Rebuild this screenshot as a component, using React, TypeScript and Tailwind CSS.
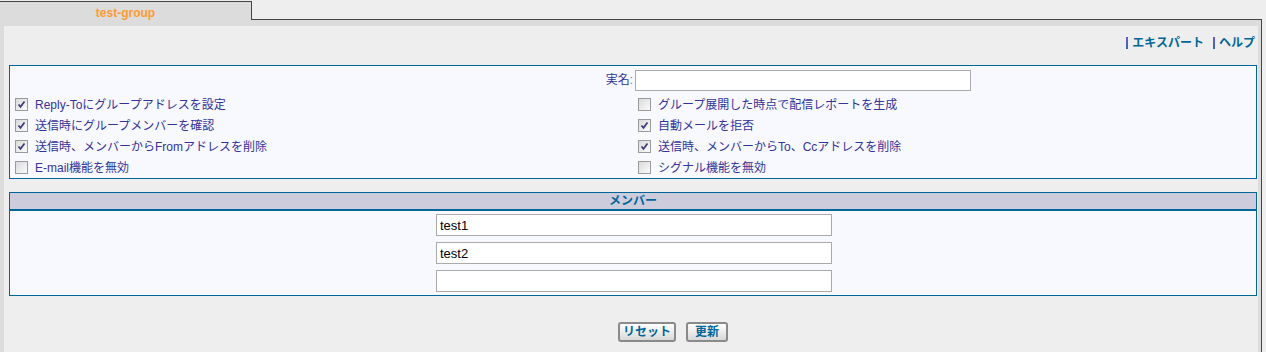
import React from 'react'

type Opt = { label: string; checked: boolean }

const leftOpts: Opt[] = [
  { label: 'Reply-Toにグループアドレスを設定', checked: true },
  { label: '送信時にグループメンバーを確認', checked: true },
  { label: '送信時、メンバーからFromアドレスを削除', checked: true },
  { label: 'E-mail機能を無効', checked: false },
]

const rightOpts: Opt[] = [
  { label: 'グループ展開した時点で配信レポートを生成', checked: false },
  { label: '自動メールを拒否', checked: true },
  { label: '送信時、メンバーからTo、Ccアドレスを削除', checked: true },
  { label: 'シグナル機能を無効', checked: false },
]

function Check({ checked }: { checked: boolean }) {
  return (
    <span className="flex h-[13px] w-[13px] shrink-0 items-center justify-center border border-[#9a9a9a] bg-linear-to-br from-[#dadada] to-[#fbfbfb]">
      {checked && (
        <svg width="9" height="9" viewBox="0 0 9 9">
          <path d="M1.5 4.5 L3.5 6.8 L7.5 1.5" stroke="#3a3a78" strokeWidth="1.7" fill="none" />
        </svg>
      )}
    </span>
  )
}

function OptRow({ opt }: { opt: Opt }) {
  return (
    <div className="flex h-[21px] items-center gap-[7px] pl-[5px]">
      <Check checked={opt.checked} />
      <span className="whitespace-nowrap text-[#333399]">{opt.label}</span>
    </div>
  )
}

function LinkItem({ text }: { text: string }) {
  return (
    <span className="flex items-center">
      <span className="mr-[4px] h-[12px] w-[2px] bg-linear-to-b from-[#6a5acd] to-[#3366aa]" />
      <span className="font-bold text-[#006699]">{text}</span>
    </span>
  )
}

export default function App() {
  return (
    <div className="h-[352px] w-[1266px] overflow-hidden bg-[#eeeeee] font-['Liberation_Sans','Noto_Sans_CJK_JP',sans-serif] text-[12px] leading-[14px]">
      <div className="w-[1262px]">
        {/* tab strip */}
        <div className="flex h-[20px]">
          <div className="mt-px h-[19px] w-[252px] border-t border-r border-[#444444] bg-[#dcdcdc] pt-[4px] text-center font-bold leading-[14px] text-[#ff9a33]">
            test-group
          </div>
          <div className="flex-1 border-b border-[#444444]" />
        </div>

        {/* frame */}
        <div className="border-r border-[#444444] bg-[#dcdcdc] pt-[6px] pr-[3px] pl-[4px]">
          <div className="h-[326px] bg-[#eeeeee]">
            {/* links */}
            <div className="flex h-[39px] items-start justify-end gap-[9px] pt-[10px] pr-[3px]">
              <LinkItem text="エキスパート" />
              <LinkItem text="ヘルプ" />
            </div>

            {/* options box */}
            <div className="mr-px ml-[5px] border border-[#006699] bg-[#f8f9fe]">
              <div className="grid h-[28px] grid-cols-2 items-center">
                <div className="text-right text-[#333399]">
                  実名<span className="text-[#aa6699]">:</span>
                </div>
                <div className="pl-[2px]">
                  <input className="h-[21px] w-[336px] border border-[#aaaaaa] bg-white px-[3px] outline-none" />
                </div>
              </div>
              <div className="grid grid-cols-2">
                <div>
                  {leftOpts.map((o) => (
                    <OptRow key={o.label} opt={o} />
                  ))}
                </div>
                <div>
                  {rightOpts.map((o) => (
                    <OptRow key={o.label} opt={o} />
                  ))}
                </div>
              </div>
            </div>

            {/* members box */}
            <div className="mt-[13px] mr-px ml-[5px] border border-[#006699] bg-[#f8f9fe]">
              <div className="h-[18px] border-b-2 border-[#006699] bg-[#ccccdc] text-center font-bold leading-[16px] text-[#006699]">
                メンバー
              </div>
              <div className="flex flex-col items-center gap-[6px] py-[3px] pl-[2px]">
                {['test1', 'test2', ''].map((v, i) => (
                  <input
                    key={i}
                    defaultValue={v}
                    className="h-[22px] w-[396px] border border-[#aaaaaa] bg-white px-[3px] font-['Liberation_Sans',sans-serif] text-[13px] text-black outline-none"
                  />
                ))}
              </div>
            </div>

            {/* buttons */}
            <div className="mt-[26px] flex gap-[10px] pl-[614px]">
              <button className="h-[20px] w-[58px] rounded-[3px] border-2 border-[#8a8a8a] bg-linear-to-b from-white to-[#d8d8d8] text-[12px] leading-none font-bold text-[#006699]">
                リセット
              </button>
              <button className="h-[20px] w-[42px] rounded-[3px] border-2 border-[#8a8a8a] bg-linear-to-b from-white to-[#d8d8d8] text-[12px] leading-none font-bold text-[#006699]">
                更新
              </button>
            </div>
          </div>
        </div>
      </div>
    </div>
  )
}
